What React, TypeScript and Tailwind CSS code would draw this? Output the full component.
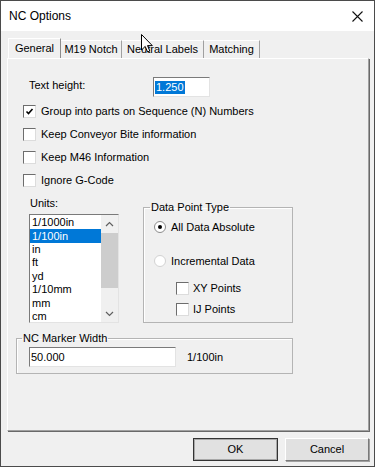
import React from 'react';

const units = ['1/1000in', '1/100in', 'in', 'ft', 'yd', '1/10mm', 'mm', 'cm'];

function CheckBox({ checked = false }: { checked?: boolean }) {
  return (
    <div className="w-[13px] h-[13px] shrink-0 bg-white border border-t-[#6d6d6d] border-l-[#6d6d6d] border-r-[#dcdcdc] border-b-[#dcdcdc] flex items-center justify-center">
      {checked && (
        <svg width="9" height="9" viewBox="0 0 9 9">
          <path d="M1.5 4.5 L3.5 6.5 L7.5 2" fill="none" stroke="#000" strokeWidth="1.6" />
        </svg>
      )}
    </div>
  );
}

function Radio({ checked = false }: { checked?: boolean }) {
  return (
    <div
      className={
        'w-[12px] h-[12px] shrink-0 rounded-full bg-white border flex items-center justify-center ' +
        (checked ? 'border-[#8c8c8c]' : 'border-[#d2d2d2]')
      }
    >
      {checked && <div className="w-[4px] h-[4px] rounded-full bg-black" />}
    </div>
  );
}

function CheckRow({ label, checked }: { label: string; checked?: boolean }) {
  return (
    <div className="h-[23px] flex items-center ml-[15px] gap-[5px]">
      <CheckBox checked={checked} />
      <span>{label}</span>
    </div>
  );
}

export default function App() {
  return (
    <div
      className="w-[375px] h-[467px] border border-[#4b4b4b] bg-[#f0f0f0] flex flex-col relative overflow-hidden text-[11px] leading-[13px] text-black"
      style={{ fontFamily: '"Liberation Sans", Arial, sans-serif' }}
    >
      {/* Title bar */}
      <div className="h-[30px] bg-white flex items-center justify-between pl-2 pr-[11px] shrink-0">
        <span className="text-[12px]">NC Options</span>
        <svg width="11" height="11" viewBox="0 0 11 11">
          <path d="M0.5 0.5 L10.5 10.5 M10.5 0.5 L0.5 10.5" stroke="#111" strokeWidth="1.1" />
        </svg>
      </div>

      {/* Tabs */}
      <div className="flex items-end mt-[7px] ml-[7px] h-[20px]">
        <div className="w-[53px] h-[20px] border-l border-t border-r border-l-white border-t-white border-r-[#8c8c8c] flex items-center justify-center pb-[1px] bg-[#f0f0f0] relative z-10">
          General
        </div>
        <div className="w-[61px] h-[18px] border-t border-r border-t-white border-r-[#a0a0a0] flex items-center justify-center">
          M19 Notch
        </div>
        <div className="w-[82px] h-[18px] border-t border-r border-t-white border-r-[#a0a0a0] flex items-center justify-center">
          Neutral Labels
        </div>
        <div className="w-[56px] h-[18px] border-t border-r border-t-white border-r-[#a0a0a0] flex items-center justify-center">
          Matching
        </div>
      </div>

      {/* Tab panel */}
      <div className="ml-[6px] w-[362px] h-[373px] border border-l-white border-t-white border-r-[#a0a0a0] border-b-[#a0a0a0] shadow-[1px_1px_0_#696969] flex flex-col">
        <div className="flex items-center ml-[21px] mt-[18px]">
          <span className="w-[124px] mb-[3px]">Text height:</span>
          <div className="w-[57px] h-[20px] bg-white border border-t-[#7a7a7a] border-l-[#7a7a7a] border-r-[#e3e3e3] border-b-[#e3e3e3] flex items-center pl-[1px]">
            <span className="bg-[#0078d7] text-white px-[1px]">1.250</span>
          </div>
        </div>

        <div className="mt-[3px]">
          <CheckRow label="Group into parts on Sequence (N) Numbers" checked />
          <CheckRow label="Keep Conveyor Bite information" />
          <CheckRow label="Keep M46 Information" />
          <CheckRow label="Ignore G-Code" />
        </div>

        <div className="flex items-start">
          {/* Units */}
          <div className="ml-[21px] flex flex-col">
            <span className="mt-[4px] h-[14px] leading-[14px] pl-[1px]">Units:</span>
            <div className="mt-[4px] w-[90px] h-[109px] bg-white border border-t-[#7a7a7a] border-l-[#7a7a7a] border-r-[#e3e3e3] border-b-[#e3e3e3] flex overflow-hidden">
              <div className="w-[71px] pt-[1px] flex flex-col">
                {units.map((u, i) => (
                  <div
                    key={u}
                    className={
                      'h-[13.4px] shrink-0 flex items-center pl-[2px] ' +
                      (i === 1 ? 'bg-[#0078d7] text-white' : '')
                    }
                  >
                    {u}
                  </div>
                ))}
              </div>
              <div className="w-[17px] bg-[#f0f0f0] flex flex-col">
                <div className="h-[17px] flex items-center justify-center">
                  <svg width="9" height="6" viewBox="0 0 9 6">
                    <path d="M1 5 L4.5 1.5 L8 5" fill="none" stroke="#606060" strokeWidth="1.2" />
                  </svg>
                </div>
                <div className="h-[55px] mt-[1px] bg-[#cdcdcd]" />
                <div className="flex-1" />
                <div className="h-[17px] flex items-center justify-center">
                  <svg width="9" height="6" viewBox="0 0 9 6">
                    <path d="M1 1 L4.5 4.5 L8 1" fill="none" stroke="#606060" strokeWidth="1.2" />
                  </svg>
                </div>
              </div>
            </div>
          </div>

          {/* Data Point Type */}
          <fieldset className="ml-[24px] mt-[8px] w-[150px] h-[123px] border border-[#b4b4b4] shadow-[inset_1px_1px_0_#fff]">
            <legend className="ml-[6px] px-[1px] leading-[14px]">Data Point Type</legend>
            <div className="h-[16px] mt-[5px] pl-[10px] flex items-center gap-[5px]">
              <Radio checked />
              <span>All Data Absolute</span>
            </div>
            <div className="h-[16px] mt-[18px] pl-[10px] flex items-center gap-[5px]">
              <Radio />
              <span>Incremental Data</span>
            </div>
            <div className="h-[16px] mt-[11px] pl-[32px] flex items-center gap-[4px]">
              <CheckBox />
              <span>XY Points</span>
            </div>
            <div className="h-[16px] mt-[5px] pl-[32px] flex items-center gap-[4px]">
              <CheckBox />
              <span>IJ Points</span>
            </div>
          </fieldset>
        </div>

        {/* NC Marker Width */}
        <fieldset className="ml-[8px] mt-[8px] w-[277px] h-[43px] border border-[#b4b4b4] shadow-[inset_1px_1px_0_#fff]">
          <legend className="ml-[5px] px-[1px] leading-[14px]">NC Marker Width</legend>
          <div className="flex items-center mt-[2px] pl-[12px]">
            <div className="w-[147px] h-[20px] bg-white border border-t-[#7a7a7a] border-l-[#7a7a7a] border-r-[#e3e3e3] border-b-[#e3e3e3] flex items-center pl-[1px]">
              50.000
            </div>
            <span className="ml-[11px]">1/100in</span>
          </div>
        </fieldset>
      </div>

      {/* Buttons */}
      <div className="flex justify-end gap-[7px] pr-[5px] mt-[7px]">
        <button className="w-[85px] h-[23px] bg-[#e1e1e1] border border-[#333333] shadow-[inset_0_0_0_1px_#a8a8a8] flex items-center justify-center">
          OK
        </button>
        <button className="w-[84px] h-[23px] bg-[#e1e1e1] border border-t-white border-l-white border-r-[#7a7a7a] border-b-[#7a7a7a] shadow-[1px_1px_0_#a0a0a0] flex items-center justify-center">
          Cancel
        </button>
      </div>

      {/* Mouse cursor */}
      <svg className="absolute left-[140px] top-[33px]" width="12" height="19" viewBox="0 0 12 19">
        <path
          d="M0.5 0.5 L0.5 16 L4.2 12.4 L6.6 18 L8.8 17 L6.5 11.6 L11.3 11.6 Z"
          fill="#fff"
          stroke="#000"
          strokeWidth="1"
          strokeLinejoin="miter"
        />
      </svg>
    </div>
  );
}
